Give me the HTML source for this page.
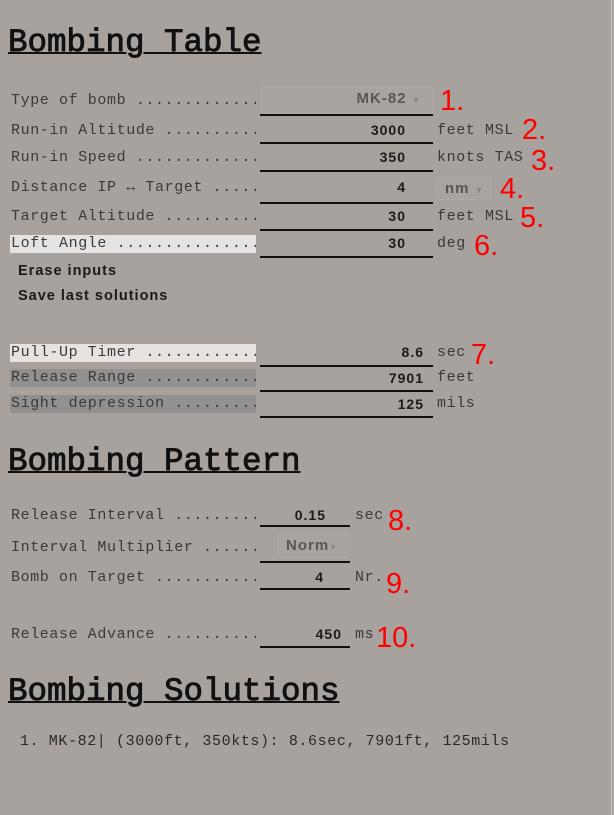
<!DOCTYPE html>
<html><head><meta charset="utf-8"><style>
body{margin:0;width:614px;height:815px;background:#a8a29e;position:relative;overflow:hidden;font-family:"Liberation Mono",monospace}
h{position:absolute;left:8px;font:32.5px/34px "Liberation Mono",monospace;-webkit-text-stroke:0.9px #111;text-decoration:underline;text-decoration-thickness:2px;color:#111;letter-spacing:0}
.l{position:absolute;left:10px;font-size:15px;letter-spacing:0.6px;line-height:18px;color:#3a3a3a;width:246px;overflow:hidden;white-space:nowrap;padding-left:1px;box-sizing:border-box}
.u{position:absolute;height:2px;background:#111}
.v{position:absolute;font:bold 14px/18px "Liberation Sans",sans-serif;color:#1a1a1a;text-align:right;letter-spacing:1px}
.t{position:absolute;font-size:15px;letter-spacing:0.6px;line-height:18px;color:#3a3a3a;white-space:nowrap}
.r{position:absolute;font:29px/30px "Liberation Sans",sans-serif;color:#f00}
.b{position:absolute;left:18px;font:bold 14.5px/18px "Liberation Sans",sans-serif;color:#1a1a1a;letter-spacing:1px}
.sel{position:absolute;border:1px solid #b0aaa6;border-radius:3px;background:#aaa4a0;color:#5a5654;font:bold 15px/24px "Liberation Sans",sans-serif;text-align:right;letter-spacing:1px}
</style></head><body>
<div style="position:absolute;right:2px;top:0;width:1px;height:815px;background:#c8c4c0"></div>
<h style="top:26px">Bombing Table</h>

<div class="l" style="top:92px">Type of bomb ......................</div>
<div class="l" style="top:122px">Run-in Altitude ...................</div>
<div class="l" style="top:149px">Run-in Speed ......................</div>
<div class="l" style="top:179px">Distance IP ↔ Target ..............</div>
<div class="l" style="top:208px">Target Altitude ...................</div>
<div class="l" style="top:235px;background:#e6e4e2">Loft Angle ........................</div>

<div class="sel" style="left:261px;top:86px;width:170px;height:26px">MK-82 <span style="font-size:9px;color:#8a8683">▼</span>&nbsp;&nbsp;</div>
<div class="u" style="left:260px;top:114px;width:173px"></div>
<div class="v" style="left:260px;top:121px;width:146px">3000</div>
<div class="u" style="left:260px;top:142px;width:173px"></div>
<div class="v" style="left:260px;top:148px;width:146px">350</div>
<div class="u" style="left:260px;top:170px;width:173px"></div>
<div class="v" style="left:260px;top:178px;width:146px">4</div>
<div class="u" style="left:260px;top:202px;width:173px"></div>
<div class="v" style="left:260px;top:207px;width:146px">30</div>
<div class="u" style="left:260px;top:229px;width:173px"></div>
<div class="v" style="left:260px;top:234px;width:146px">30</div>
<div class="u" style="left:260px;top:256px;width:173px"></div>

<div class="t" style="left:437px;top:122px">feet MSL</div>
<div class="t" style="left:437px;top:149px">knots TAS</div>
<div class="sel" style="left:436px;top:176px;width:55px;height:24px;text-align:left;padding-left:8px;box-sizing:border-box">nm <span style="font-size:9px;color:#8a8683">▼</span></div>
<div class="t" style="left:437px;top:208px">feet MSL</div>
<div class="t" style="left:437px;top:235px">deg</div>

<div class="r" style="left:440px;top:86px">1.</div>
<div class="r" style="left:522px;top:115px">2.</div>
<div class="r" style="left:531px;top:146px">3.</div>
<div class="r" style="left:500px;top:174px">4.</div>
<div class="r" style="left:520px;top:203px">5.</div>
<div class="r" style="left:474px;top:231px">6.</div>

<div class="b" style="top:262px">Erase inputs</div>
<div class="b" style="top:287px">Save last solutions</div>

<div class="l" style="top:344px;background:#e6e4e2">Pull-Up Timer .....................</div>
<div class="l" style="top:369px;background:#939090">Release Range .....................</div>
<div class="l" style="top:395px;background:#939090">Sight depression ..................</div>
<div class="v" style="left:260px;top:343px;width:164px">8.6</div>
<div class="u" style="left:260px;top:365px;width:173px"></div>
<div class="v" style="left:260px;top:369px;width:164px">7901</div>
<div class="u" style="left:260px;top:390px;width:173px"></div>
<div class="v" style="left:260px;top:395px;width:164px">125</div>
<div class="u" style="left:260px;top:416px;width:173px"></div>
<div class="t" style="left:437px;top:344px">sec</div>
<div class="t" style="left:437px;top:369px">feet</div>
<div class="t" style="left:437px;top:395px">mils</div>
<div class="r" style="left:471px;top:340px">7.</div>

<h style="top:445px">Bombing Pattern</h>

<div class="l" style="top:507px">Release Interval ..................</div>
<div class="l" style="top:539px">Interval Multiplier ...............</div>
<div class="l" style="top:569px">Bomb on Target ....................</div>
<div class="l" style="top:626px">Release Advance ...................</div>

<div class="v" style="left:260px;top:506px;width:66px">0.15</div>
<div class="u" style="left:260px;top:525px;width:90px"></div>
<div class="sel" style="left:278px;top:533px;width:72px;height:25px;text-align:left;padding-left:7px;box-sizing:border-box">Norm<span style="font-size:8px;color:#8a8683">▼</span></div>
<div class="u" style="left:260px;top:561px;width:90px"></div>
<div class="v" style="left:260px;top:568px;width:64px">4</div>
<div class="u" style="left:260px;top:588px;width:90px"></div>
<div class="v" style="left:260px;top:625px;width:82px">450</div>
<div class="u" style="left:260px;top:646px;width:90px"></div>

<div class="t" style="left:355px;top:507px">sec</div>
<div class="t" style="left:355px;top:569px">Nr.</div>
<div class="t" style="left:355px;top:626px">ms</div>
<div class="r" style="left:388px;top:506px">8.</div>
<div class="r" style="left:386px;top:569px">9.</div>
<div class="r" style="left:376px;top:623px">10.</div>

<h style="top:675px">Bombing Solutions</h>
<div class="t" style="left:20px;top:733px;color:#2a2a2a">1. MK-82| (3000ft, 350kts): 8.6sec, 7901ft, 125mils</div>
</body></html>
